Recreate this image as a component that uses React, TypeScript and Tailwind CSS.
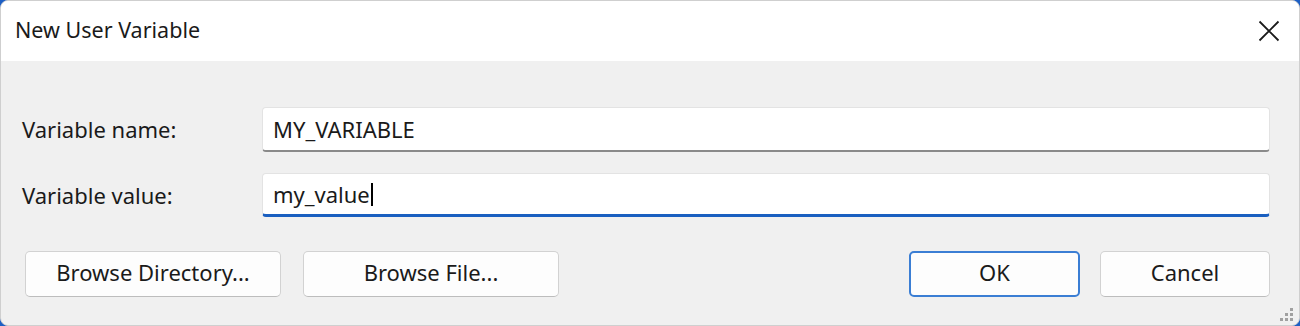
export default function App() {
  const font = { fontFamily: '"Noto Sans", "Open Sans", sans-serif' }
  const btn =
    "h-[46px] pb-[3px] bg-[#fdfdfd] rounded-[5px] border border-[#d2d2d2] border-b-[#bdbdbd] text-[22px] text-[#1a1a1a]"

  return (
    <div className="w-[1300px] h-[326px] bg-[#1d5fc4] overflow-hidden" style={font}>
      <div className="w-full h-full flex flex-col rounded-[8px] overflow-hidden border border-[#cfcfcf] bg-[#f0f0f0]">
        <div className="h-[60px] shrink-0 bg-white flex items-center justify-between pl-[14px] pr-[19px]">
          <span className="text-[21.5px] text-[#1a1a1a] pb-[2px]">New User Variable</span>
          <svg width="22" height="22" viewBox="0 0 22 22" className="text-[#1a1a1a]">
            <path d="M1.5 1.5 L20.5 20.5 M20.5 1.5 L1.5 20.5" stroke="currentColor" strokeWidth="1.8" fill="none" />
          </svg>
        </div>

        <div className="relative flex-1 flex flex-col pl-[21px] pr-[29px] pt-[46px]">
          <div className="flex items-center">
            <label className="w-[240px] text-[22px] text-[#1a1a1a]">Variable name:</label>
            <div className="flex-1 h-[45px] bg-white rounded-[4px] border border-[#e3e3e3] border-b-[#8a8a8a] border-b-2 flex items-center pl-[10px]">
              <span className="text-[22px] text-[#1a1a1a]">MY_VARIABLE</span>
            </div>
          </div>

          <div className="flex items-center mt-[21px]">
            <label className="w-[240px] text-[22px] text-[#1a1a1a]">Variable value:</label>
            <div className="flex-1 h-[44px] bg-white rounded-[4px] border border-[#e3e3e3] border-b-[#1a5fc0] border-b-[3px] flex items-center pl-[10px]">
              <span className="text-[22px] text-[#1a1a1a]">my_value</span>
              <span className="w-[2px] h-[23px] bg-black ml-[1px] mt-[1px]" />
            </div>
          </div>

          <div className="flex items-center mt-[34px] pl-[3px]">
            <button className={"w-[256px] " + btn}>Browse Directory...</button>
            <button className={"ml-[22px] w-[256px] " + btn}>Browse File...</button>
            <div className="flex-1" />
            <button className="w-[171px] h-[46px] pb-[3px] bg-[#fdfdfd] rounded-[5px] border-2 border-[#3b7ed4] text-[22px] text-[#1a1a1a]">
              OK
            </button>
            <button className={"ml-[20px] w-[170px] " + btn}>Cancel</button>
          </div>

          <svg width="14" height="14" viewBox="0 0 14 14" className="absolute right-[5px] bottom-[3px]">
            <rect x="10" y="0" width="3" height="3" fill="#a0a0a0" />
            <rect x="5" y="5" width="3" height="3" fill="#a0a0a0" />
            <rect x="10" y="5" width="3" height="3" fill="#a0a0a0" />
            <rect x="0" y="10" width="3" height="3" fill="#a0a0a0" />
            <rect x="5" y="10" width="3" height="3" fill="#a0a0a0" />
            <rect x="10" y="10" width="3" height="3" fill="#a0a0a0" />
          </svg>
        </div>
      </div>
    </div>
  )
}
